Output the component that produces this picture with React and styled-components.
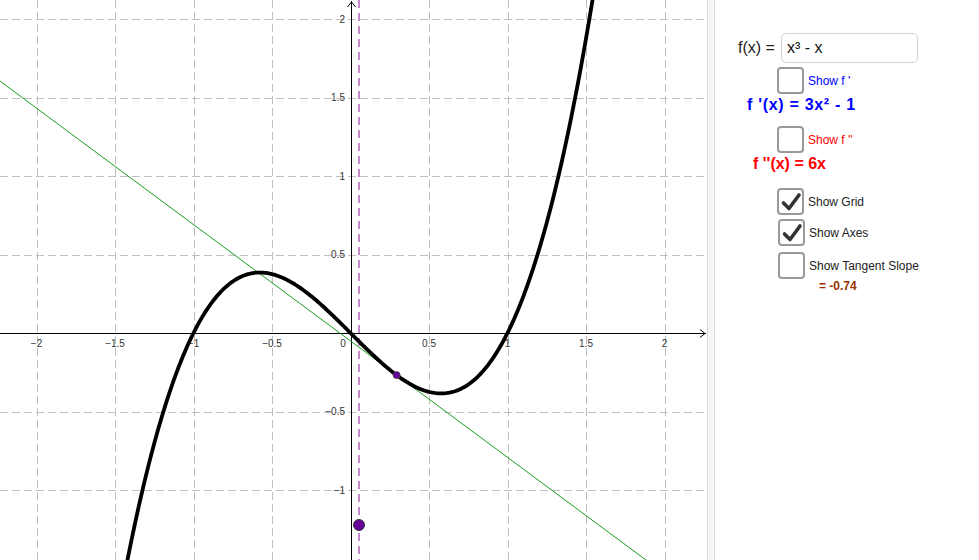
import React from "react";
import styled, { createGlobalStyle } from "styled-components";

const GlobalStyle = createGlobalStyle`
  html, body {
    margin: 0;
    padding: 0;
    background: #fff;
    overflow: hidden;
  }
  body {
    font-family: "Liberation Sans", Arial, sans-serif;
  }
`;

// graph mapping
const W = 707;
const H = 560;
const OX = 350.5;
const OY = 333;
const S = 157;
const X = (x) => OX + S * x;
const Y = (y) => OY - S * y;

const f = (x) => x * x * x - x;
const A = 0.2936;
const M = 3 * A * A - 1;

const curvePath = () => {
  let d = "";
  for (let i = 0; i <= 300; i++) {
    const x = -1.5 + (3.1 * i) / 300;
    d += (i === 0 ? "M" : "L") + X(x).toFixed(2) + " " + Y(f(x)).toFixed(2) + " ";
  }
  return d;
};

const tangent = (x) => f(A) + M * (x - A);

const gridX = [-2, -1.5, -1, -0.5, 0.5, 1, 1.5, 2];
const gridY = [-1, -0.5, 0.5, 1, 1.5, 2];

const fmt = (v) => (v < 0 ? "\u2212" + String(-v) : String(v));

const Page = styled.div`
  display: flex;
  width: 979px;
  height: 560px;
`;

const GraphPane = styled.div`
  width: ${W}px;
  height: ${H}px;
  flex: none;
`;

const Divider = styled.div`
  width: 6px;
  flex: none;
  background: #f6f6f6;
  border-left: 1px solid #dadada;
  border-right: 1px solid #dadada;
`;

const Panel = styled.div`
  flex: 1;
  display: flex;
  flex-direction: column;
  align-items: flex-start;
  padding-top: 33px;
`;

const Row = styled.div`
  display: flex;
  align-items: center;
  margin-left: ${(p) => p.$left}px;
  margin-top: ${(p) => p.$top || 0}px;
`;

const FnLabel = styled.span`
  font-size: 16px;
  color: #222;
`;

const Input = styled.div`
  width: 130px;
  height: 28px;
  margin-left: 6px;
  padding-left: 5px;
  border: 1px solid #d4d4d4;
  border-radius: 5px;
  font-size: 16px;
  line-height: 28px;
  color: #111;
`;

const Box = styled.div`
  width: 23px;
  height: 23px;
  border: 2px solid #999;
  border-radius: 4px;
  background: #fff;
  display: flex;
  align-items: center;
  justify-content: center;
`;

const BoxLabel = styled.span`
  margin-left: 4px;
  font-size: 12px;
  color: ${(p) => p.$color || "#222"};
`;

const Formula = styled.div`
  font-size: 16px;
  line-height: 20px;
  font-weight: bold;
  letter-spacing: ${(p) => p.$spacing || 0}px;
  color: ${(p) => p.$color};
`;

const Slope = styled.div`
  font-size: 12px;
  line-height: 14px;
  font-weight: bold;
  color: #993300;
`;

const Check = () => (
  <svg width="22" height="22" viewBox="0 0 22 22">
    <path d="M3.5 12 L9 17.5 L19 4" fill="none" stroke="#333" strokeWidth="3.6" strokeLinecap="round" strokeLinejoin="round" />
  </svg>
);

const CheckBox = ({ checked, label, color, left, top }) => (
  <Row $left={left} $top={top}>
    <Box>{checked && <Check />}</Box>
    <BoxLabel $color={color}>{label}</BoxLabel>
  </Row>
);

const Graph = () => {
  const px = (v) => Math.round(v) + 0.5;
  return (
    <svg width={W} height={H} viewBox={`0 0 ${W} ${H}`} style={{ display: "block" }}>
      <defs>
        <clipPath id="clip">
          <rect x="0" y="0" width={W} height={H} />
        </clipPath>
      </defs>
      <g stroke="#c0c0c0" strokeWidth="1" strokeDasharray="8 4">
        {gridX.map((g) => (
          <line key={"gx" + g} x1={px(X(g))} y1="0" x2={px(X(g))} y2={H} />
        ))}
        {gridY.map((g) => (
          <line key={"gy" + g} x1="0" y1={px(Y(g))} x2={W} y2={px(Y(g))} />
        ))}
      </g>
      <g fontFamily="Liberation Sans, Arial, sans-serif" fontSize="10" fill="#333">
        {gridX.map((g) => (
          <text key={"lx" + g} x={X(g)} y={OY + 14} textAnchor="middle">
            {fmt(g)}
          </text>
        ))}
        <text x={343} y={OY + 14} textAnchor="middle">0</text>
        {gridY.map((g) => (
          <text key={"ly" + g} x={345} y={Y(g) + 3.5} textAnchor="end">
            {fmt(g)}
          </text>
        ))}
      </g>
      <g stroke="#000" strokeWidth="1" fill="none">
        <line x1="0" y1={px(OY)} x2={W - 1} y2={px(OY)} />
        <path d={`M${W - 7} ${px(OY) - 4} L${W - 2} ${px(OY)} L${W - 7} ${px(OY) + 4}`} />
        <line x1={px(OX)} y1="1" x2={px(OX)} y2={H} />
        <path d={`M${px(OX) - 4} 7 L${px(OX)} 2 L${px(OX) + 4} 7`} />
      </g>
      <line x1="359" y1="0" x2="359" y2={H} stroke="#c788cc" strokeWidth="2" strokeDasharray="8 5" />
      <g clipPath="url(#clip)">
        <line x1={X(-2.4)} y1={Y(tangent(-2.4))} x2={X(2.3)} y2={Y(tangent(2.3))} stroke="#1aa01a" strokeWidth="1" />
        <path d={curvePath()} fill="none" stroke="#000" strokeWidth="3.8" strokeLinejoin="round" />
      </g>
      <circle cx={X(A)} cy={Y(f(A))} r="3.5" fill="#660099" stroke="#444" strokeWidth="0.8" />
      <circle cx="359" cy="525" r="5.5" fill="#660099" stroke="#333" strokeWidth="1" />
    </svg>
  );
};

export default function App() {
  return (
    <>
      <GlobalStyle />
      <Page>
        <GraphPane>
          <Graph />
        </GraphPane>
        <Divider />
        <Panel>
          <Row $left={23}>
            <FnLabel>f(x) =</FnLabel>
            <Input>x³ - x</Input>
          </Row>
          <CheckBox left={62} top={4} label="Show f '" color="#0000ff" />
          <Row $left={32} $top={1}>
            <Formula $color="#0000ff" $spacing={0.7}>f '(x) = 3x² - 1</Formula>
          </Row>
          <CheckBox left={62} top={11} label={"Show f ''"} color="#ff0000" />
          <Row $left={38} $top={1}>
            <Formula $color="#ff0000">f ''(x) = 6x</Formula>
          </Row>
          <CheckBox left={62} top={14} checked label="Show Grid" />
          <CheckBox left={63} top={4} checked label="Show Axes" />
          <CheckBox left={63} top={6} label="Show Tangent Slope" />
          <Row $left={104} $top={0}>
            <Slope>= -0.74</Slope>
          </Row>
        </Panel>
      </Page>
    </>
  );
}
